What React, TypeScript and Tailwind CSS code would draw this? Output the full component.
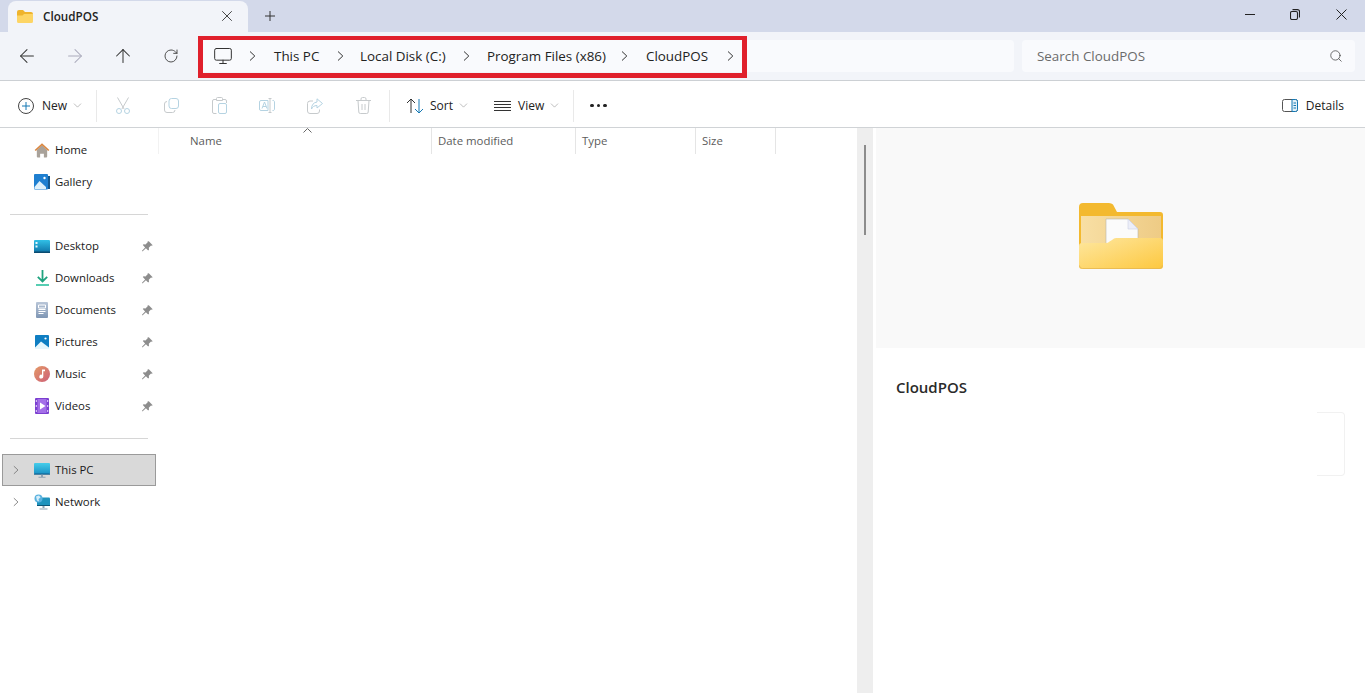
import React from "react";
import { ArrowLeft, ArrowRight, ArrowUp, RotateCw, ChevronDown, X, Search, Monitor } from "lucide-react";

const font = { fontFamily: '"Open Sans","Noto Sans",sans-serif' };
const G = "#c6cacc";
const B = "#b5d3e2";

function Chev({ color = "#333" }: { color?: string }) {
  return (
    <svg width="7" height="10" viewBox="0 0 7 10" fill="none" stroke={color} strokeWidth="1">
      <path d="M1 .5L5.800 5 1 9.500" />
    </svg>
  );
}

function PinIcon() {
  return (
    <svg width="11" height="11" viewBox="0 0 11 11" fill="#8d8d8d">
      <path d="M6.800.3l3.900 3.900-1 .6-.7-.2-2.200 2.200.2 1.900-.8.8-2.300-2.300L.7 10.300 0 10.300 0 9.700l3.100-3.300L.8 4.100l.8-.8 1.900.2 2.200-2.200-.2-.7z" />
    </svg>
  );
}

function FolderSmall() {
  return (
    <svg width="16" height="13" viewBox="0 0 16 13">
      <path d="M0 2a2 2 0 0 1 2-2h4l2 2h6a2 2 0 0 1 2 2v2H0z" fill="#efb42d" />
      <path d="M0 5.500h5.500L7 4h9v7.500a1.500 1.500 0 0 1-1.500 1.500h-13A1.500 1.500 0 0 1 0 11.500z" fill="#fdd565" />
    </svg>
  );
}

function FolderBig() {
  return (
    <svg width="84" height="66" viewBox="0 0 84 66" className="block">
      <defs>
        <linearGradient id="fr" x1="0" y1="0" x2="1" y2="1">
          <stop offset="0" stopColor="#fee7a0" />
          <stop offset="1" stopColor="#fdc83f" />
        </linearGradient>
        <linearGradient id="bk" x1="0" y1="0" x2="1" y2="0">
          <stop offset="0" stopColor="#f8dfa4" />
          <stop offset="1" stopColor="#eecb85" />
        </linearGradient>
      </defs>
      <path d="M0 4a4 4 0 0 1 4-4h26q2.500 0 4 1.500L38 9h43a3 3 0 0 1 3 3v32H0z" fill="#f3b92f" />
      <rect x="2" y="13" width="80" height="31" fill="url(#bk)" />
      <path d="M27 16h22l10 10v20H27z" fill="#fbfbfb" stroke="#b8b5ad" strokeWidth="0.600" />
      <path d="M49 16v10h10z" fill="#eceef8" stroke="#ccd0e4" strokeWidth="0.600" />
      <path d="M0 43a3 3 0 0 1 3-3h24q2 0 3.500-1.500L33 37q2-2 4-2h44a3 3 0 0 1 3 3v25a3 3 0 0 1-3 3H3a3 3 0 0 1-3-3z" fill="url(#fr)" />
      <path d="M.4 62.500a3 3 0 0 0 3 3h77a3 3 0 0 0 3-3" fill="none" stroke="#e4b650" strokeWidth="0.800" />
    </svg>
  );
}

const sideIcons: Record<string, React.ReactNode> = {
  Home: (
    <svg width="17" height="16" viewBox="0 0 17 16">
      <path d="M3 8l5.500-5L14 8v7a1 1 0 0 1-1 1h-2.500v-4h-4v4H4a1 1 0 0 1-1-1z" fill="#a9a29a" />
      <path d="M.7 8L8.500.8 16.300 8l-1.200 1-6.600-5.800L1.900 9z" fill="#d98742" />
    </svg>
  ),
  Gallery: (
    <svg width="16" height="16" viewBox="0 0 16 16">
      <rect x="14" y="2" width="2" height="13" fill="#14588f" />
      <rect x="0" y="0" width="14" height="15.500" rx="1" fill="#1f7fd0" />
      <path d="M.5 13l5-6 6.500 6v2H.5z" fill="#dff1fb" />
      <circle cx="10.500" cy="4" r="1.200" fill="#fff" />
    </svg>
  ),
  Desktop: (
    <svg width="16" height="13" viewBox="0 0 16 13">
      <defs>
        <linearGradient id="dk" x1="0" y1="0" x2="0" y2="1">
          <stop offset="0" stopColor="#31c0e6" />
          <stop offset="1" stopColor="#0f74a8" />
        </linearGradient>
      </defs>
      <rect width="16" height="12.500" rx="1" fill="url(#dk)" />
      <rect x="1.500" y="2" width="2" height="2" fill="#e6f7fd" />
      <rect x="1.500" y="5.500" width="2" height="2" fill="#e6f7fd" />
      <rect y="11.500" width="16" height="1.500" fill="#0b4b70" />
    </svg>
  ),
  Downloads: (
    <svg width="13" height="16" viewBox="0 0 13 16">
      <path d="M6.500 0v11M1.800 6.800L6.500 11.500 11.200 6.800" fill="none" stroke="#1fa37f" strokeWidth="1.800" />
      <rect y="14.200" width="13" height="1.600" fill="#2ec1a0" />
    </svg>
  ),
  Documents: (
    <svg width="12" height="16" viewBox="0 0 12 16">
      <defs>
        <linearGradient id="dc" x1="0" y1="0" x2="0" y2="1">
          <stop offset="0" stopColor="#b9c6d8" />
          <stop offset="1" stopColor="#7f96b4" />
        </linearGradient>
      </defs>
      <rect width="12" height="16" rx="1" fill="url(#dc)" />
      <path d="M2.500 3h7v3h-7zM2.500 7.500h7M2.500 9.500h7M2.500 11.500h5" stroke="#fff" strokeWidth="1" fill="none" />
    </svg>
  ),
  Pictures: (
    <svg width="14" height="14" viewBox="0 0 14 14">
      <rect width="14" height="14" rx="1" fill="#0f7ec2" />
      <path d="M0 12.500L6 6.500 14 12.500V14H0z" fill="#e6f6fc" />
      <circle cx="10.500" cy="3.500" r="1.100" fill="#fff" />
    </svg>
  ),
  Music: (
    <svg width="16" height="16" viewBox="0 0 16 16">
      <defs>
        <linearGradient id="ms" x1="0" y1="0" x2="1" y2="1">
          <stop offset="0" stopColor="#e49a66" />
          <stop offset="1" stopColor="#cd5f78" />
        </linearGradient>
      </defs>
      <circle cx="8" cy="8" r="8" fill="url(#ms)" />
      <path d="M8 3.500h3v1.800H9.300V10.500a2 2 0 1 1-1.300-1.800z" fill="#fff" />
    </svg>
  ),
  Videos: (
    <svg width="14" height="16" viewBox="0 0 14 16">
      <rect width="14" height="16" rx="1" fill="#7b3fd0" />
      <rect x="2.500" y="1" width="9" height="14" fill="#a46fe8" />
      <path d="M5 4.500l5.500 3.500L5 11.500z" fill="#fff" />
      <path d="M.8 2h1v2h-1zM.8 7h1v2h-1zM.8 12h1v2h-1zM12.200 2h1v2h-1zM12.200 7h1v2h-1zM12.200 12h1v2h-1z" fill="#e8dcfa" />
    </svg>
  ),
  "This PC": (
    <svg width="16" height="15" viewBox="0 0 16 15">
      <defs>
        <linearGradient id="pc" x1="0" y1="0" x2="0" y2="1">
          <stop offset="0" stopColor="#45cdea" />
          <stop offset="1" stopColor="#1a92c6" />
        </linearGradient>
      </defs>
      <rect width="16" height="11" rx="1" fill="url(#pc)" />
      <rect y="10.500" width="16" height="1.200" fill="#0e5f8d" />
      <path d="M7 11.700h2v2H7zM4.500 13.800h7v1h-7z" fill="#8ea2b2" />
    </svg>
  ),
  Network: (
    <svg width="16" height="16" viewBox="0 0 16 16">
      <rect x="3" y="3.500" width="13" height="8.500" rx="1" fill="#1f93bd" />
      <rect x="3" y="11" width="13" height="1" fill="#0c5678" />
      <path d="M8.500 12h2v2h-2zM5.500 14.500h8v1h-8z" fill="#8ea2b2" />
      <circle cx="4.500" cy="4.500" r="4" fill="#5ab2df" />
      <path d="M2 2.500l3-1 1.500 2-2 1.500 .5 2.500-2-1z" fill="#d6eefa" />
    </svg>
  ),
};

function SideRow({ name, pin }: { name: string; pin?: boolean }) {
  return (
    <div className="flex h-8 items-center text-[11.4px] text-[#1a1a1a]">
      <div className="ml-[34px] flex w-[16px] items-center justify-center">{sideIcons[name]}</div>
      <span className="ml-[5px] flex-1">{name}</span>
      {pin && (
        <div className="mr-[5px]">
          <PinIcon />
        </div>
      )}
    </div>
  );
}

function ExpRow({ name, selected }: { name: string; selected?: boolean }) {
  return (
    <div className={`mx-[2px] flex h-8 items-center border text-[11.4px] text-[#1a1a1a] ${selected ? "border-[#9a9a9a] bg-[#d9d9d9]" : "border-transparent"}`}>
      <div className="ml-[10px] flex w-[6px]">
        <Chev color="#777" />
      </div>
      <div className="ml-[15px] flex w-[16px] items-center justify-center">{sideIcons[name]}</div>
      <span className="ml-[5px]">{name}</span>
    </div>
  );
}

function Crumb({ w, label }: { w: number; label: string }) {
  return (
    <div className="flex h-full items-center pt-[1px]" style={{ width: w }}>
      <span className="text-[13.4px] whitespace-nowrap text-[#222]">{label}</span>
    </div>
  );
}

function Sep() {
  return <div className="h-[32px] w-px bg-[#e9e9e9]" />;
}

function ToolIcon({ children }: { children: React.ReactNode }) {
  return <div className="flex w-[48px] items-center justify-center">{children}</div>;
}

function Caret() {
  return <ChevronDown size={13} strokeWidth={1} color="#888" />;
}

export default function App() {
  return (
    <div className="flex h-[693px] w-[1365px] flex-col overflow-hidden bg-white" style={font}>
      {/* title bar */}
      <div className="flex h-[32px] items-end bg-[#d3d9ea]">
        <div className="ml-[8px] flex h-[31px] w-[240px] items-center rounded-t-[8px] bg-[#f2f4f9] pl-[9px]">
          <FolderSmall />
          <span className="ml-[10px] flex-1 text-[11.7px] font-semibold text-[#222]">CloudPOS</span>
          <X size={18} strokeWidth={1.200} color="#333" className="mr-[12px] mb-[2px]" />
        </div>
        <div className="ml-[17px] flex h-[31px] items-center pb-[1px]">
          <svg width="10" height="10" viewBox="0 0 10 10" fill="none" stroke="#333" strokeWidth="1">
            <path d="M5 0v10M0 5h10" />
          </svg>
        </div>
        <div className="flex-1" />
        <div className="flex h-[32px] items-center pb-[3px]">
          <div className="mr-[35px] h-px w-[10px] bg-[#222]" />
          <svg width="10" height="11" viewBox="0 0 10 11" className="mr-[36px]" fill="none" stroke="#222" strokeWidth="1.100">
            <rect x="0.500" y="2.500" width="7" height="8" rx="1.500" />
            <path d="M2.500 .6h5a2 2 0 0 1 2 2v6" />
          </svg>
          <svg width="11" height="11" viewBox="0 0 11 11" className="mr-[18px]" fill="none" stroke="#222" strokeWidth="1">
            <path d="M.5 .5l10 10M10.500 .5l-10 10" />
          </svg>
        </div>
      </div>

      {/* address row */}
      <div className="flex h-[49px] items-center border-b border-[#ccd0d4] bg-[#f2f4f9] pb-px">
        <div className="ml-[3px] flex w-[192px]">
          <div className="flex w-[48px] justify-center"><ArrowLeft size={22} strokeWidth={1.100} color="#333" /></div>
          <div className="flex w-[48px] justify-center"><ArrowRight size={22} strokeWidth={1.100} color="#aab" /></div>
          <div className="flex w-[48px] justify-center"><ArrowUp size={22} strokeWidth={1.100} color="#333" /></div>
          <div className="flex w-[48px] items-center justify-center"><RotateCw size={16} strokeWidth={1.400} color="#444" /></div>
        </div>
        <div className="relative ml-[5px] flex h-[32px] w-[814px] items-center rounded-[4px] bg-[#f9fafd]">
          <div className="ml-[13px] flex w-[36px] items-center"><Monitor size={20} strokeWidth={1.200} color="#333" /></div>
          <div className="flex w-[25px]"><Chev /></div>
          <Crumb w={63} label="This PC" />
          <div className="flex w-[23px]"><Chev /></div>
          <Crumb w={103} label="Local Disk (C:)" />
          <div className="flex w-[24px]"><Chev /></div>
          <Crumb w={134} label="Program Files (x86)" />
          <div className="flex w-[25px]"><Chev /></div>
          <Crumb w={81} label="CloudPOS" />
          <Chev />
          <div className="pointer-events-none absolute top-[-4px] left-[-2px] h-[42px] w-[549px] border-[5px] border-t-[4px] border-[#e0202c]" />
        </div>
        <div className="ml-[8px] flex h-[32px] w-[333px] items-center justify-between rounded-[4px] bg-[#f9fafd] pr-[12px] pl-[15px]">
          <span className="pt-[1px] text-[13.4px] text-[#6b6b6b]">Search CloudPOS</span>
          <Search size={14} strokeWidth={1.300} color="#444" />
        </div>
      </div>

      {/* toolbar */}
      <div className="flex h-[47px] items-center border-b border-[#d0d3d6] bg-white pt-[3px] text-[12px] text-[#222]">
        <svg width="16" height="16" viewBox="0 0 16 16" className="ml-[18px]" fill="none">
          <circle cx="8" cy="8" r="7.500" stroke="#444" strokeWidth="1" />
          <path d="M8 4v8M4 8h8" stroke="#1478b4" strokeWidth="1" />
        </svg>
        <span className="ml-[8px] w-[29px]">New</span>
        <Caret />
        <div className="ml-[12px]"><Sep /></div>
        <div className="ml-[2px] flex">
          <ToolIcon>
            <svg width="16" height="17" viewBox="0 0 16 17" fill="none" strokeWidth="1">
              <path d="M2.500 .5l6.600 11.500M13.500 .5L6.900 12" stroke={G} />
              <circle cx="4" cy="14" r="2.500" stroke={B} />
              <circle cx="12" cy="14" r="2.500" stroke={B} />
            </svg>
          </ToolIcon>
          <ToolIcon>
            <svg width="15" height="15" viewBox="0 0 15 15" fill="none" strokeWidth="1">
              <rect x="5" y="0.500" width="9.500" height="10" rx="2.500" stroke={B} />
              <path d="M3 3.500a2.500 2.500 0 0 0-2.500 2.500v6a2.500 2.500 0 0 0 2.500 2.500h5.500a2.500 2.500 0 0 0 2.500-2.500" stroke={G} />
            </svg>
          </ToolIcon>
          <ToolIcon>
            <svg width="15" height="17" viewBox="0 0 15 17" fill="none" strokeWidth="1">
              <path d="M4 2.500H2a1.500 1.500 0 0 0-1.500 1.500v11a1.500 1.500 0 0 0 1.500 1.500h2.500M11 2.500h2a1.500 1.500 0 0 1 1.500 1.500v2M4.500 1.500a1 1 0 0 1 1-1h4a1 1 0 0 1 1 1v2h-6z" stroke={G} />
              <rect x="6.500" y="6.500" width="8" height="10" rx="1.500" stroke={B} />
            </svg>
          </ToolIcon>
          <ToolIcon>
            <svg width="16" height="15" viewBox="0 0 16 15" fill="none" strokeWidth="1">
              <path d="M9 2.500H2a1.500 1.500 0 0 0-1.500 1.500v7A1.500 1.500 0 0 0 2 12.500h7z" stroke={B} />
              <path d="M13.500 2.500A1.500 1.500 0 0 1 15.500 4v7a1.500 1.500 0 0 1-2 1.500" stroke={B} />
              <path d="M3 10.500l2.500-6.500 2.500 6.500M3.900 8.500h3.200" stroke={B} />
              <path d="M11 .5v14M9.500 .5h3M9.500 14.500h3" stroke={G} />
            </svg>
          </ToolIcon>
          <ToolIcon>
            <svg width="16" height="16" viewBox="0 0 16 16" fill="none" strokeWidth="1">
              <path d="M6 3H3a2.500 2.500 0 0 0-2.500 2.500v7.500A2.500 2.500 0 0 0 3 15.500h7a2.500 2.500 0 0 0 2.500-2.500v-1.500" stroke={G} />
              <path d="M10 .8l5.500 4.700L10 10V7.500c-3 0-4.500 1.500-5.500 3.500 0-4 2-6.500 5.500-7z" stroke={B} />
            </svg>
          </ToolIcon>
          <ToolIcon>
            <svg width="15" height="17" viewBox="0 0 15 17" fill="none" stroke={G} strokeWidth="1">
              <path d="M0 3.500h15M5 3.500V2a1.500 1.500 0 0 1 1.500-1.500h2A1.500 1.500 0 0 1 10 2v1.500M2 3.500l.8 11.500a1.500 1.500 0 0 0 1.500 1.500h6.400a1.500 1.500 0 0 0 1.500-1.500L13 3.500" />
              <path d="M6 7v6M9 7v6" />
            </svg>
          </ToolIcon>
        </div>
        <div className="ml-[2px]"><Sep /></div>
        <svg width="18" height="16" viewBox="0 0 18 16" className="ml-[16px]" fill="none" strokeWidth="1">
          <path d="M5 15V1M1 5l4-4 4 4" stroke="#333" />
          <path d="M13 1v14M9 11l4 4 4-4" stroke="#1478b4" />
        </svg>
        <span className="ml-[6px] w-[27px]">Sort</span>
        <Caret />
        <svg width="17" height="10" viewBox="0 0 17 10" className="ml-[24px]" fill="none" stroke="#333" strokeWidth="1">
          <path d="M0 .5h17M0 3.500h17M0 6.500h17M0 9.500h17" />
        </svg>
        <span className="ml-[7px] w-[30px]">View</span>
        <Caret />
        <div className="ml-[12px]"><Sep /></div>
        <div className="ml-[16px] flex gap-[3px]">
          <div className="h-[3.500px] w-[3.500px] rounded-full bg-[#222]" />
          <div className="h-[3.500px] w-[3.500px] rounded-full bg-[#222]" />
          <div className="h-[3.500px] w-[3.500px] rounded-full bg-[#222]" />
        </div>
        <div className="flex-1" />
        <svg width="16" height="13" viewBox="0 0 16 13" fill="none">
          <rect x="0.500" y="0.500" width="15" height="12" rx="2" stroke="#555" />
          <path d="M10 .5h3.500a2 2 0 0 1 2 2v8a2 2 0 0 1-2 2H10z" stroke="#1478b4" fill="#e3f1f8" />
          <path d="M11.500 4h2.500M11.500 6.500h2.500M11.500 9h2.500" stroke="#1478b4" />
        </svg>
        <span className="mr-[21px] ml-[8px]">Details</span>
      </div>

      {/* main */}
      <div className="flex min-h-0 flex-1">
        {/* sidebar */}
        <div className="w-[158px] shrink-0 pt-[6px]">
          <SideRow name="Home" />
          <SideRow name="Gallery" />
          <div className="mt-[16px] mb-[15px] ml-[10px] h-px w-[138px] bg-[#d6d6d6]" />
          <SideRow name="Desktop" pin />
          <SideRow name="Downloads" pin />
          <SideRow name="Documents" pin />
          <SideRow name="Pictures" pin />
          <SideRow name="Music" pin />
          <SideRow name="Videos" pin />
          <div className="mt-[16px] mb-[15px] ml-[10px] h-px w-[138px] bg-[#d6d6d6]" />
          <ExpRow name="This PC" selected />
          <ExpRow name="Network" />
        </div>

        {/* file list */}
        <div className="relative w-[699px] shrink-0">
          <div className="flex h-[26px] text-[11.4px] text-[#5c5c5c]">
            <div className="flex w-[273px] items-center border-l border-[#f2f2f2] pl-[31px]">Name</div>
            <div className="flex w-[144px] items-center border-l border-[#e5e5e5] pl-[6px]">Date modified</div>
            <div className="flex w-[120px] items-center border-l border-[#e5e5e5] pl-[6px]">Type</div>
            <div className="flex w-[81px] items-center border-x border-[#e5e5e5] pl-[6px]">Size</div>
          </div>
          <svg width="9" height="5" viewBox="0 0 9 5" className="absolute top-0 left-[145px]" fill="none" stroke="#666" strokeWidth="1">
            <path d="M.5 4.500l4-4 4 4" />
          </svg>
        </div>

        {/* scrollbar */}
        <div className="w-[16px] shrink-0 bg-[#eeeeee] pt-[17px] pl-[7px]">
          <div className="h-[90px] w-[2px] bg-[#8c8c8c]" />
        </div>

        {/* details */}
        <div className="min-w-0 flex-1 pl-[3px]">
          <div className="h-[220px] bg-[#f9f9f9] pt-[75px] pl-[203px]">
            <FolderBig />
          </div>
          <div className="pl-[20px]">
            <div className="mt-[29px] text-[15px] leading-[20px] font-semibold text-[#2a2a2a]">CloudPOS</div>
            <div className="mt-[15px] flex justify-end pr-[20px]">
              <div className="h-[64px] w-[28px] rounded-r-[4px] border-y border-r border-[#f1f1f1]" />
            </div>
          </div>
        </div>
      </div>
    </div>
  );
}
